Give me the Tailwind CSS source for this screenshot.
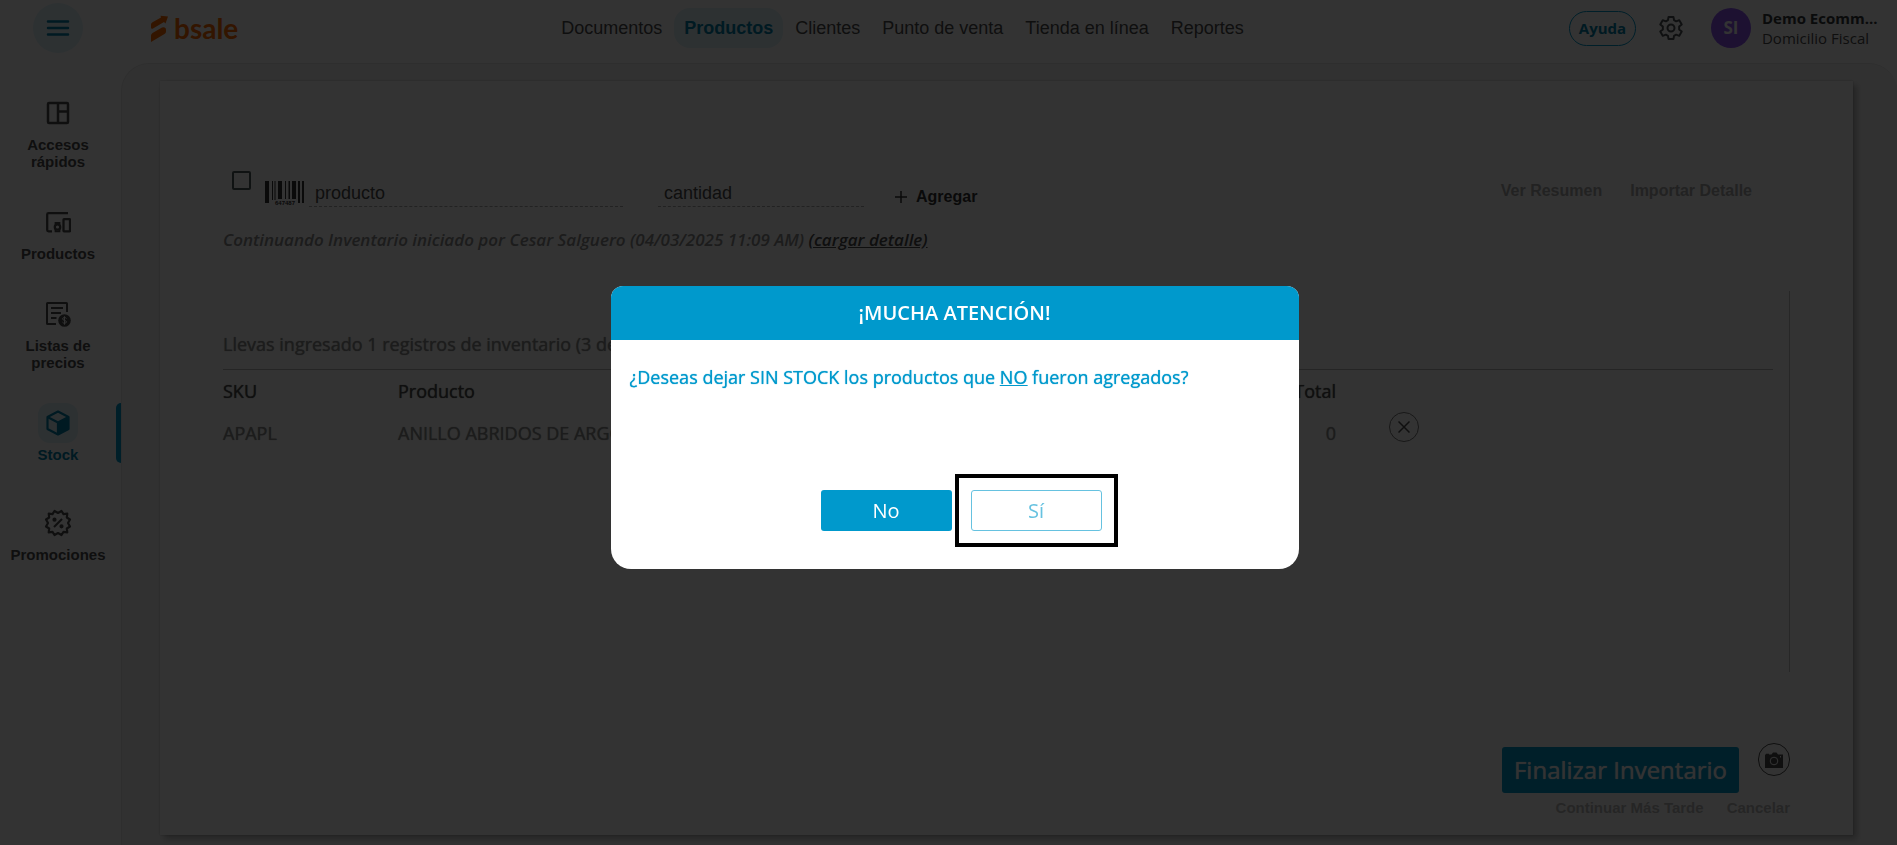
<!DOCTYPE html>
<html lang="es">
<head>
  <meta charset="UTF-8" />
  <meta name="viewport" content="width=device-width, initial-scale=1.0"/>
  <title>Inventario - Bsale</title>
  <script src="https://cdn.jsdelivr.net/npm/@tailwindcss/browser@4"></script>
</head>
<body class="bg-white min-h-screen flex flex-col font-['Open_Sans',sans-serif] text-[#4d4d4d]">

  <!-- Top bar -->
  <header class="h-[63px] shrink-0 flex items-start justify-between pt-[3px] pr-4 pl-[33px]">
    <div class="flex items-center w-[391px] h-[50px]">
      <button aria-label="Menú" class="w-[50px] h-[50px] rounded-full bg-[#e0f3fa] flex items-center justify-center">
        <svg class="w-6 h-6" viewBox="0 0 24 24" fill="none" stroke="#0080aa" stroke-width="2.500" stroke-linecap="round"><path d="M2 5.500h20M2 12h20M2 18.500h20"/></svg>
      </button>
      <a href="#" class="flex items-center ml-[67px] text-[#ff6a00]">
        <svg class="w-[18px] h-[27px]" viewBox="0 0 18 27" fill="currentColor"><path d="M1 9.500Q1 8 2.500 7.200L11 2.500 10.500.8 18 1.500 15.500 8.500 14 7 3 13.600Q1 14.300 1 12.500zM1 20.500Q1 19 2.500 18L12 12.500Q16 11.500 16 15v1.500Q16 18 14.500 19L1 27z"/></svg>
        <span class="ml-1.5 text-[28px] leading-8 font-bold font-['Lato',sans-serif]">bsale</span>
      </a>
    </div>

    <nav class="flex items-center gap-[2px] h-[50px] text-[18px] font-['Liberation_Sans',sans-serif] whitespace-nowrap">
      <a href="#" class="px-[10px]">Documentos</a>
      <a href="#" class="px-[10px] h-10 leading-10 rounded-[16px] bg-[#e0f3fa] text-[#0080aa] font-bold">Productos</a>
      <a href="#" class="px-[10px]">Clientes</a>
      <a href="#" class="px-[10px]">Punto de venta</a>
      <a href="#" class="px-[10px]">Tienda en línea</a>
      <a href="#" class="px-[10px]">Reportes</a>
    </nav>

    <div class="flex items-center justify-end w-[500px] h-[50px]">
      <button class="w-[67px] h-[35px] rounded-full border border-[#0099cc] text-[#0080aa] text-[15px] font-bold">Ayuda</button>
      <button aria-label="Configuración" class="ml-[21px]">
        <svg class="w-7 h-7" viewBox="0 0 24 24" fill="none" stroke="#4d5254" stroke-width="1.700" stroke-linejoin="round"><path d="M9.900 2.500h4.200l.5 2.800 1.800 1 2.700-1 2.100 3.600-2.200 1.900v2.400l2.200 1.900-2.100 3.600-2.700-1-1.800 1-.5 2.800H9.900l-.5-2.800-1.800-1-2.700 1-2.100-3.600L5 13.200v-2.400L2.800 8.900l2.100-3.600 2.700 1 1.800-1z"/><circle cx="12" cy="12" r="3"/></svg>
      </button>
      <div class="ml-[26px] w-10 h-10 rounded-full bg-[#8f55f5] text-white text-[17px] font-bold flex items-center justify-center">SI</div>
      <div class="ml-[11px] w-[119px] text-[15px] leading-5">
        <div class="font-bold text-[#33373b] truncate">Demo Ecomm...</div>
        <div class="whitespace-nowrap">Domicilio Fiscal</div>
      </div>
    </div>
  </header>

  <div class="flex-1 flex">
    <!-- Sidebar -->
    <aside class="w-[121px] shrink-0 pt-[30px] flex flex-col gap-8 text-center text-[15px] leading-[17px] font-bold font-['Liberation_Sans',sans-serif]">
      <a href="#" class="flex flex-col items-center gap-[3px] pr-[5px]">
        <span class="w-10 h-10 flex items-center justify-center">
          <svg class="w-6 h-6" viewBox="0 0 24 24" fill="none" stroke="currentColor" stroke-width="2.500"><rect x="2" y="2" width="20" height="20" rx="1"/><path d="M12 2v20M12 10.500h10"/></svg>
        </span>
        <span>Accesos<br>rápidos</span>
      </a>
      <a href="#" class="flex flex-col items-center gap-[3px] pr-[5px]">
        <span class="w-10 h-10 flex items-center justify-center">
          <svg class="w-[26px] h-6" viewBox="0 0 26 24" fill="none" stroke="currentColor" stroke-width="2.300"><path d="M23 3.200H3.500Q2.200 3.200 2.200 4.500v15.500q0 1.300 1.300 1.300H7"/><rect x="18.500" y="9.200" width="6.500" height="12.100" rx=".5"/><circle cx="12.500" cy="17" r="2.700"/><path d="M10.500 14.500v-1.500h4v1.500M10.500 19.500v1.800h4v-1.800" stroke-width="1.800"/></svg>
        </span>
        <span>Productos</span>
      </a>
      <a href="#" class="flex flex-col items-center gap-[3px] pr-[5px]">
        <span class="w-10 h-10 flex items-center justify-center">
          <svg class="w-[26px] h-[26px]" viewBox="0 0 26 26" fill="none" stroke="currentColor" stroke-width="2"><path d="M11 23H2.500Q2 23 2 22.500V2.500Q2 2 2.500 2h19q.5 0 .5.500V11M6 7h12M6 12h10M6 17h5.500"/><circle cx="19.500" cy="19.500" r="6.300" fill="currentColor" stroke="none"/><path d="M21.500 17.500c-.5-1.300-4-1.300-4 .4s4 1.300 4 3-3.500 1.700-4 .3M19.500 15.300v8.400" stroke="#fff" stroke-width="1"/></svg>
        </span>
        <span>Listas de<br>precios</span>
      </a>
      <a href="#" class="flex items-stretch text-[#0080aa]">
        <span class="flex-1 flex flex-col items-center gap-[3px]">
          <span class="w-10 h-10 rounded-[12px] bg-[#e0f3fa] flex items-center justify-center">
            <svg class="w-[26px] h-[26px]" viewBox="0 0 26 26" fill="none" stroke="currentColor" stroke-width="2.200" stroke-linejoin="round"><path d="M13 1.500 23.500 7v12L13 24.500 2.500 19V7z"/><path d="M13 12.500 23.500 7v12L13 24.500z" fill="currentColor" stroke="none"/><path d="M2.500 7 13 12.500 23.500 7M13 12.500v12"/></svg>
          </span>
          <span>Stock</span>
        </span>
        <span class="w-[5px] rounded-l-[5px] bg-[#0099cc]"></span>
      </a>
      <a href="#" class="mt-2 flex flex-col items-center gap-[3px] pr-[5px]">
        <span class="w-10 h-10 flex items-center justify-center">
          <svg class="w-7 h-7" viewBox="0 0 28 28" fill="none" stroke="currentColor" stroke-width="2.200" stroke-linejoin="round"><path d="m14 4 3.500-2 2 3.200 3.800-.5-.5 3.800L26 10.500 24 14l2 3.500-3.200 2 .5 3.800-3.800-.5-2 3.200-3.500-2-3.500 2-2-3.200-3.800.5.500-3.800-3.200-2L4 14l-2-3.500 3.200-2-.5-3.800 3.800.5 2-3.200z"/><path d="m10 18 8-8"/><circle cx="10.500" cy="10.700" r="1" fill="currentColor"/><circle cx="17.500" cy="17.300" r="1" fill="currentColor"/></svg>
        </span>
        <span>Promociones</span>
      </a>
    </aside>

    <!-- Content -->
    <main class="flex-1 min-w-0 flex bg-[#f6f6f6] border-t border-l border-[#e6e6e6] rounded-t-[28px] pt-[17px] pl-[38px] pr-11 pb-[10px]">
      <section class="flex-1 min-w-0 bg-white shadow-[4px_4px_6px_rgba(0,0,0,0.25),0_0_2px_rgba(0,0,0,0.2)] flex flex-col pt-[90px] pl-[63px] pr-[63px] pb-[15px]">

        <form class="flex items-end h-9 text-[#333]">
          <input type="checkbox" aria-label="Código de barras" class="appearance-none self-start ml-[9px] w-[19px] h-[19px] border-2 border-[#4d5a5c] rounded-[2px]" />
          <svg class="ml-[14px] mb-[2px] w-10 h-6" viewBox="0 0 40 24" fill="#333"><path d="M0 0h4v22H0zM7 0h1v19H7zM9.500 0h1v19h-1zM13 0h4v18h-4zM20 0h1v18h-1zM23.500 0h1.500v18h-1.500zM27 0h4v18h-4zM33 0h2v22h-2zM37 0h2v22h-2z"/><text x="10" y="23.500" font-size="6" font-family="Liberation Sans" font-weight="bold">647487</text></svg>
          <input type="text" aria-label="producto" placeholder="producto" class="ml-[4px] w-[314px] h-[27px] pl-[6px] border-b border-dashed border-[#aaa] text-[18px] font-['Liberation_Sans',sans-serif] placeholder:text-[#4d4d4d]" />
          <input type="text" aria-label="cantidad" placeholder="cantidad" class="ml-[35px] w-[206px] h-[27px] pl-[6px] border-b border-dashed border-[#aaa] text-[18px] font-['Liberation_Sans',sans-serif] placeholder:text-[#4d4d4d]" />
          <button type="button" class="ml-[31px] flex items-center gap-[9px] h-5 text-base font-bold font-['Liberation_Sans',sans-serif]">
            <svg class="w-3 h-3" viewBox="0 0 12 12" stroke="currentColor" stroke-width="1.500"><path d="M6 0v12M0 6h12"/></svg>
            Agregar
          </button>
          <div class="ml-auto mr-[38px] mb-1 flex gap-7 text-base font-bold text-[#aaa] font-['Liberation_Sans',sans-serif]">
            <button type="button">Ver Resumen</button>
            <button type="button">Importar Detalle</button>
          </div>
        </form>

        <p class="mt-[21px] text-[17px] leading-6 italic font-semibold text-[#8c8c8c]">Continuando Inventario iniciado por Cesar Salguero (04/03/2025 11:09 AM) <a href="#" class="underline text-[#4d4d4d]">(cargar detalle)</a></p>

        <div class="mt-[39px] flex-1 border-r border-[#c4c4c4] pt-[41px] pr-4 text-[18px] leading-6 [text-shadow:0_0_1px_currentColor]">
          <p class="pb-[13px] border-b border-[#bbb] text-[#8c8c8c]">Llevas ingresado 1 registros de inventario (3 de</p>
          <table class="w-full table-fixed">
            <thead>
              <tr class="h-[42px] text-left text-[#4d4d4d]">
                <th class="w-[175px] font-normal">SKU</th>
                <th class="font-normal">Producto</th>
                <th class="w-[200px] font-normal text-right">Total</th>
                <th class="w-[437px]"></th>
              </tr>
            </thead>
            <tbody>
              <tr class="h-[42px] text-[#8c8c8c]">
                <td>APAPL</td>
                <td>ANILLO ABRIDOS DE ARGO</td>
                <td class="text-right">0</td>
                <td class="align-top pl-[53px]">
                  <button aria-label="Eliminar" class="w-[30px] h-[30px] rounded-full border border-[#777] text-[#4d4d4d] flex items-center justify-center">
                    <svg class="w-3 h-3" viewBox="0 0 12 12" stroke="currentColor" stroke-width="1.500"><path d="m.5.5 11 11M11.500.5l-11 11"/></svg>
                  </button>
                </td>
              </tr>
            </tbody>
          </table>
        </div>

        <!-- Actions -->
        <div class="mt-[71px] flex justify-end items-start">
          <button class="mt-1 w-[237px] h-[46px] rounded-[3px] bg-[#0099cc] text-white text-2xl [text-shadow:0_0_1px_currentColor]">Finalizar Inventario</button>
          <button aria-label="Cámara" class="ml-[19px] w-8 h-[33px] rounded-full border border-[#4d4d4d] text-[#4d4d4d] flex items-center justify-center">
            <svg class="w-[18px] h-4" viewBox="0 0 18 16" fill="currentColor"><path d="M0 2.500h1V1.700h3v.8h2.500L8 .5h3.500L13 2.500h5V16H0z"/><circle cx="9" cy="9" r="3.800" fill="none" stroke="#fff" stroke-width="1"/><path d="M15 4h1v1.500h-1z" fill="#fff"/></svg>
          </button>
        </div>
        <div class="mt-[3px] flex justify-end gap-[23px] text-[15px] leading-6 font-bold text-[#bbb] font-['Liberation_Sans',sans-serif]">
          <button>Continuar Más Tarde</button>
          <button>Cancelar</button>
        </div>
      </section>
    </main>
  </div>

  <!-- Confirmation dialog -->
  <div class="fixed inset-0 bg-black/80 flex items-center justify-center pt-[10px] pl-3">
    <div role="dialog" aria-labelledby="dialogTitle" class="w-full max-w-[688px] bg-white rounded-t-[12px] rounded-b-[20px] overflow-hidden">
      <h2 id="dialogTitle" class="h-[54px] leading-[54px] bg-[#0099cc] text-white text-[20px] font-semibold text-center">¡MUCHA ATENCIÓN!</h2>
      <div class="px-[19px] pt-[25px] pb-[38px]">
        <p class="text-[18px] leading-6 text-[#0099cc] [text-shadow:0_0_1px_currentColor]">¿Deseas dejar SIN STOCK los productos que <u>NO</u> fueron agregados?</p>
        <div class="mt-[101px] flex justify-center gap-[19px] pl-[13px]">
          <button class="w-[131px] h-[41px] rounded-[3px] bg-[#0099cc] text-white text-[20px]">No</button>
          <div class="relative">
            <button class="w-[131px] h-[41px] rounded-[3px] border border-[#66c2e0] text-[#66c2e0] text-[20px]">Sí</button>
            <span class="absolute -inset-4 border-4 border-black pointer-events-none"></span>
          </div>
        </div>
      </div>
    </div>
  </div>

</body>
</html>
